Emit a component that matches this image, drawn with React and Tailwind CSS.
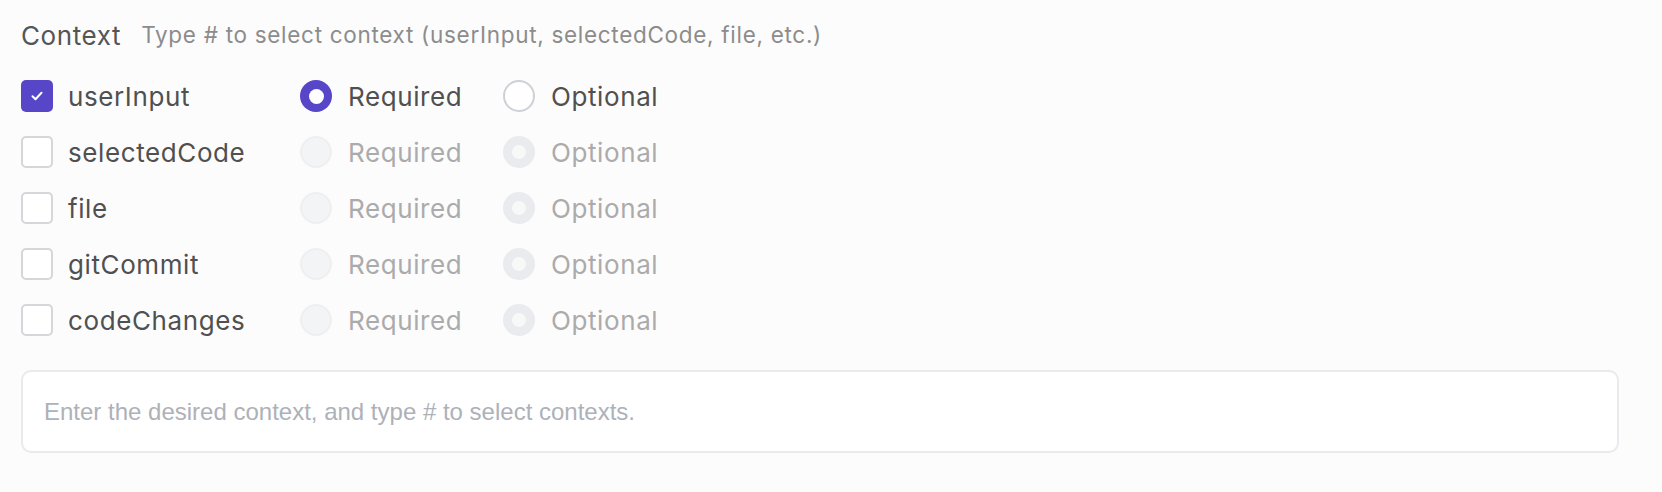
import { useState } from "react";

const contexts = ["userInput", "selectedCode", "file", "gitCommit", "codeChanges"];

function Checkbox({ checked }) {
  return checked ? (
    <span className="flex h-[32px] w-[32px] items-center justify-center rounded-[5px] bg-[#5846c9]">
      <svg width="16" height="16" viewBox="0 0 16 16" fill="none">
        <path d="M3.5 8.2l3 3 6-6.4" stroke="white" strokeWidth="2" strokeLinecap="round" strokeLinejoin="round" />
      </svg>
    </span>
  ) : (
    <span className="h-[32px] w-[32px] rounded-[5px] border-2 border-[#d4d6da] bg-white" />
  );
}

function Radio({ checked, disabled }) {
  if (disabled) {
    return checked ? (
      <span className="flex h-[32px] w-[32px] items-center justify-center rounded-full bg-[#e9ebee]">
        <span className="h-[14px] w-[14px] rounded-full bg-[#f8f8f9]" />
      </span>
    ) : (
      <span className="h-[32px] w-[32px] rounded-full border-2 border-[#eeeff1] bg-[#f3f4f6]" />
    );
  }
  return checked ? (
    <span className="flex h-[32px] w-[32px] items-center justify-center rounded-full bg-[#5846c9]">
      <span className="h-[15px] w-[15px] rounded-full bg-white" />
    </span>
  ) : (
    <span className="h-[32px] w-[32px] rounded-full border-2 border-[#cdd0d5] bg-white" />
  );
}

export default function App() {
  const [selected] = useState({ userInput: "required" });

  return (
    <div className="min-h-screen bg-[#fcfcfd] pl-[21px] pr-[43px] pt-[17px] font-['Inter',sans-serif]">
      {/* Header */}
      <div className="flex h-[36px] items-center">
        <span className="text-[26px] tracking-[0.6px] text-[#555555]">Context</span>
        <span className="ml-[20px] text-[22.5px] tracking-[0.7px] text-[#8c8c8c]">
          Type # to select context (userInput, selectedCode, file, etc.)
        </span>
      </div>

      {/* Context rows */}
      <div className="mt-[15px] flex flex-col">
        {contexts.map((name) => {
          const enabled = !!selected[name];
          const value = selected[name] || "optional";
          return (
            <div key={name} className="flex h-[56px] items-center">
              <div className="flex w-[279px] items-center gap-[15px]">
                <Checkbox checked={enabled} />
                <span className="text-[26px] tracking-[0.6px] text-[#505050]">{name}</span>
              </div>
              <div className="flex w-[203px] items-center gap-[16px]">
                <Radio checked={value === "required"} disabled={!enabled} />
                <span className={`text-[26px] tracking-[0.6px] ${enabled ? "text-[#505050]" : "text-[#ababab]"}`}>Required</span>
              </div>
              <div className="flex items-center gap-[16px]">
                <Radio checked={value === "optional"} disabled={!enabled} />
                <span className={`text-[26px] tracking-[0.6px] ${enabled ? "text-[#505050]" : "text-[#ababab]"}`}>Optional</span>
              </div>
            </div>
          );
        })}
      </div>

      {/* Input */}
      <div className="mt-[22px] flex h-[83px] items-center rounded-[10px] border-2 border-[#e8eaed] bg-white px-[21px]">
        <span className="font-['Liberation_Sans',Arial,sans-serif] text-[24px] text-[#adb1b8]">
          Enter the desired context, and type # to select contexts.
        </span>
      </div>
    </div>
  );
}
